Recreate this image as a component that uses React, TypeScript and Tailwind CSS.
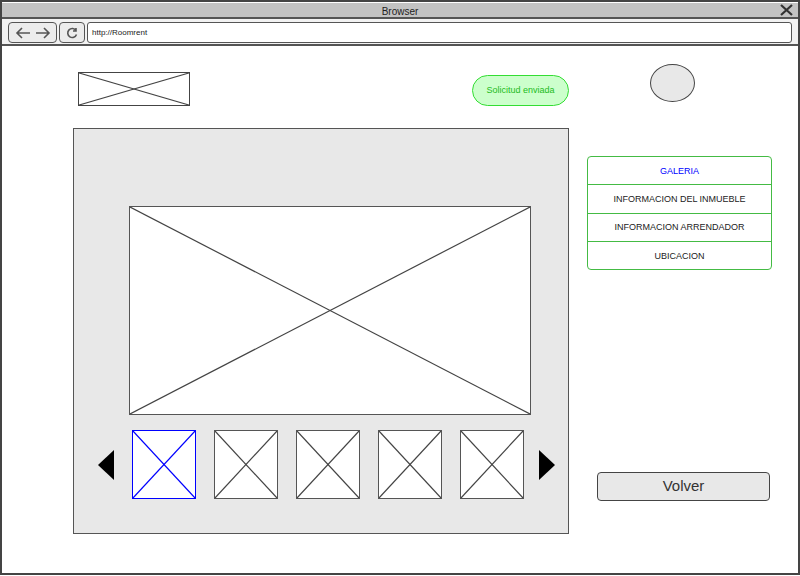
const font = { fontFamily: '"Comic Sans MS", "Liberation Sans", "DejaVu Sans", sans-serif' };

function Placeholder({ className, stroke = '#444' }: { className: string; stroke?: string }) {
  return (
    <div className={`bg-white ${className}`}>
      <svg className="block w-full h-full" viewBox="0 0 100 100" preserveAspectRatio="none">
        <line x1="0" y1="0" x2="100" y2="100" stroke={stroke} strokeWidth="1.2" vectorEffect="non-scaling-stroke" />
        <line x1="100" y1="0" x2="0" y2="100" stroke={stroke} strokeWidth="1.2" vectorEffect="non-scaling-stroke" />
      </svg>
    </div>
  );
}

const menu = ['GALERIA', 'INFORMACION DEL INMUEBLE', 'INFORMACION ARRENDADOR', 'UBICACION'];

export default function App() {
  return (
    <div className="w-[800px] h-[576px] bg-white" style={font}>
      <div className="w-full h-[575px] border-[2px] border-[#444] flex flex-col">
        {/* Title bar */}
        <div className="h-[16px] mt-[1px] bg-[#c3c3c3] border-b-[2px] border-[#555] flex items-center relative">
          <span className="flex-1 text-center text-[10px] leading-none pt-[3px] text-[#222]">Browser</span>
          <svg className="absolute right-[5px] top-[1px]" width="13" height="12" viewBox="0 0 13 12">
            <path d="M1 1 L12 11 M12 1 L1 11" stroke="#333" strokeWidth="2.2" />
          </svg>
        </div>

        {/* Toolbar */}
        <div className="h-[27px] bg-[#f2f2f2] border-b-[2px] border-[#555] flex items-center px-[6px] pt-[2px] gap-[2px]">
          <div className="w-[49px] h-[21px] rounded-[4px] border-[1.5px] border-[#555] bg-[#ececec] flex items-center justify-center gap-[4px] text-[#555]">
            <svg width="16" height="12" viewBox="0 0 16 12"><path d="M15 6 H2 M7 1 L2 6 L7 11" stroke="#555" strokeWidth="1.6" fill="none" /></svg>
            <svg width="16" height="12" viewBox="0 0 16 12"><path d="M1 6 H14 M9 1 L14 6 L9 11" stroke="#555" strokeWidth="1.6" fill="none" /></svg>
          </div>
          <div className="w-[26px] h-[21px] rounded-[4px] border-[1.5px] border-[#555] bg-[#ececec] flex items-center justify-center">
            <svg width="12" height="12" viewBox="0 0 12 12"><path d="M10 3.5 A4.5 4.5 0 1 0 10.5 7.5 M10 1 V4 H7" stroke="#555" strokeWidth="1.6" fill="none" /></svg>
          </div>
          <div className="flex-1 h-[21px] rounded-[3px] border-[1.5px] border-[#555] bg-white flex items-center px-[4px] text-[8px] text-[#222]">
            http://Roomrent
          </div>
        </div>

        {/* Content */}
        <div className="flex pl-[71px] pt-[18px]">
          <div className="w-[496px] flex flex-col">
            <div className="h-[64px] flex items-start justify-between">
              <Placeholder className="ml-[5px] mt-[8px] w-[112px] h-[34px] border border-[#444]" />
              <div className="mt-[11px] w-[97px] h-[31px] rounded-full border border-[#33dd33] bg-[#ccffcc] flex items-center justify-center text-[9px] text-[#22bb22]">
                Solicitud enviada
              </div>
            </div>
            <div className="h-[406px] bg-[#e8e8e8] border border-[#555] flex flex-col pt-[77px]">
              <Placeholder className="ml-[55px] w-[402px] h-[209px] border border-[#555]" />
              <div className="flex items-center mt-[15px] pl-[24px]">
                <svg width="16" height="30" viewBox="0 0 16 30"><path d="M16 0 V30 L0 15 Z" fill="#000" /></svg>
                <div className="flex gap-[18px] ml-[18px]">
                  <Placeholder className="w-[64px] h-[69px] border border-[#0000ff]" stroke="#0000ff" />
                  {[0, 1, 2, 3].map((i) => (
                    <Placeholder key={i} className="w-[64px] h-[69px] border border-[#555]" />
                  ))}
                </div>
                <svg className="ml-[15px]" width="16" height="30" viewBox="0 0 16 30"><path d="M0 0 V30 L16 15 Z" fill="#000" /></svg>
              </div>
            </div>
          </div>

          <div className="ml-[18px] w-[185px] flex flex-col">
            <div className="ml-[63px] w-[45px] h-[38px] rounded-[50%] bg-[#e8e8e8] border-[1.5px] border-[#444]" />
            <div className="mt-[54px] h-[114px] border border-[#44bb44] rounded-[4px] flex flex-col">
              {menu.map((m, i) => (
                <div
                  key={m}
                  className={`flex-1 flex items-center justify-center pt-[2px] text-[9px] ${i === 0 ? 'text-[#0000ff]' : 'text-[#222]'} ${i < menu.length - 1 ? 'border-b border-[#44bb44]' : ''}`}
                >
                  {m}
                </div>
              ))}
            </div>
            <div className="mt-[202px] ml-[10px] w-[173px] h-[29px] rounded-[4px] border-[1.5px] border-[#444] bg-[#e8e8e8] flex items-center justify-center text-[15px] text-[#333]">
              Volver
            </div>
          </div>
        </div>
      </div>
    </div>
  );
}
